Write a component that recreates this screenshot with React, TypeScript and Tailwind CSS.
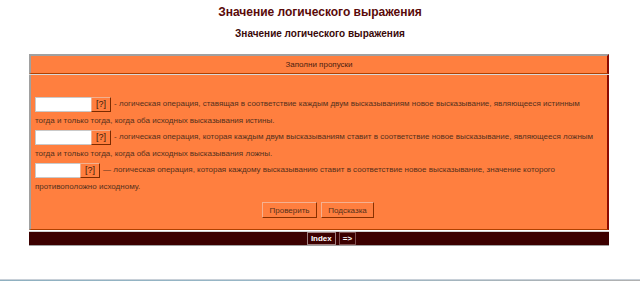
import React from 'react';

const font = { fontFamily: '"Liberation Sans", Arial, sans-serif' };

function Blank({ w }: { w: string }) {
  return (
    <span className="inline-flex align-middle mr-[3px]">
      <span className={`${w} h-[15px] bg-white border border-[#c9c9c9] border-r-0`} />
      <span className="h-[15px] px-[4px] bg-[#ff7f3f] border border-[#f0b090] border-r-[#7a2a00] border-b-[#7a2a00] text-[9px] leading-[13px] text-[#3a1a0a]">
        [?]
      </span>
    </span>
  );
}

const items = [
  {
    w: 'w-[56px]',
    first: '- логическая операция, ставящая в соответствие каждым двум высказываниям новое высказывание, являющееся истинным',
    rest: 'тогда и только тогда, когда оба исходных высказывания истины.',
  },
  {
    w: 'w-[56px]',
    first: '- логическая операция, которая каждым двум высказываниям ставит в соответствие новое высказывание, являющееся ложным',
    rest: 'тогда и только тогда, когда оба исходных высказывания ложны.',
  },
  {
    w: 'w-[45px]',
    first: '— логическая операция, которая каждому высказыванию ставит в соответствие новое высказывание, значение которого',
    rest: 'противоположно исходному.',
  },
];

export default function App() {
  return (
    <div className="w-[640px] h-[281px] bg-white relative overflow-hidden" style={font}>
      <h1 className="pt-[5px] text-center text-[12px] leading-[15px] font-bold text-[#5a0a0a]">
        Значение логического выражения
      </h1>
      <h2 className="mt-[7px] text-center text-[10px] leading-[13px] font-bold text-[#3a0a0a]">
        Значение логического выражения
      </h2>

      <div className="ml-[29px] mt-[14px] w-[580px]">
        <div className="h-[20px] bg-[#ff7f3f] border-t-2 border-l-2 border-t-[#a0a0a0] border-l-[#a0a0a0] border-r-2 border-r-[#8a0a00] border-b border-b-[#b04000] flex items-center justify-center text-[8px] text-[#4a2010]">
          Заполни пропуски
        </div>
        <div className="h-[1px] bg-[#d8d8d8]" />
        <div className="h-[155px] bg-[#ff7f3f] border-l-2 border-l-[#a0a0a0] border-r-2 border-r-[#8a0a00] border-b border-b-[#b04000] pl-[4px] pr-[8px] pt-[21px] text-[8px] leading-[16.5px] text-[#55301c]">
          {items.map((it, i) => (
            <div key={i}>
              <div className="flex items-center h-[16.5px] whitespace-nowrap">
                <Blank w={it.w} />
                <span>{it.first}</span>
              </div>
              <div className="h-[16.5px]">{it.rest}</div>
            </div>
          ))}
          <div className="mt-[7px] flex justify-center gap-[4px] pl-[2px]">
            <button className="h-[16px] w-[55px] bg-[#ff7f3f] border border-[#f5b090] border-r-[#8a3000] border-b-[#8a3000] text-[8px] text-[#55301c]">
              Проверить
            </button>
            <button className="h-[16px] w-[53px] bg-[#ff7f3f] border border-[#f5b090] border-r-[#8a3000] border-b-[#8a3000] text-[8px] text-[#55301c]">
              Подсказка
            </button>
          </div>
        </div>
        <div className="mt-[1px] h-[15px] bg-[#3c0000] border-t border-t-[#d0d0d0] border-b border-b-[#a0a0a0] flex justify-center gap-[3px] pl-[25px]">
          <span className="h-[13px] px-[3px] border border-[#a08080] text-[8px] leading-[11px] font-bold text-white flex items-center">
            Index
          </span>
          <span className="h-[13px] px-[3px] border border-[#805050] text-[8px] leading-[11px] font-bold text-white flex items-center">
            =&gt;
          </span>
        </div>
      </div>

      <div className="absolute left-0 right-0 bottom-0 h-[2px] bg-gradient-to-r from-[#8fb0c0] via-[#9ab8c8] to-[#b0b0b0] border-t border-t-[#c8d0d8]" />
    </div>
  );
}
